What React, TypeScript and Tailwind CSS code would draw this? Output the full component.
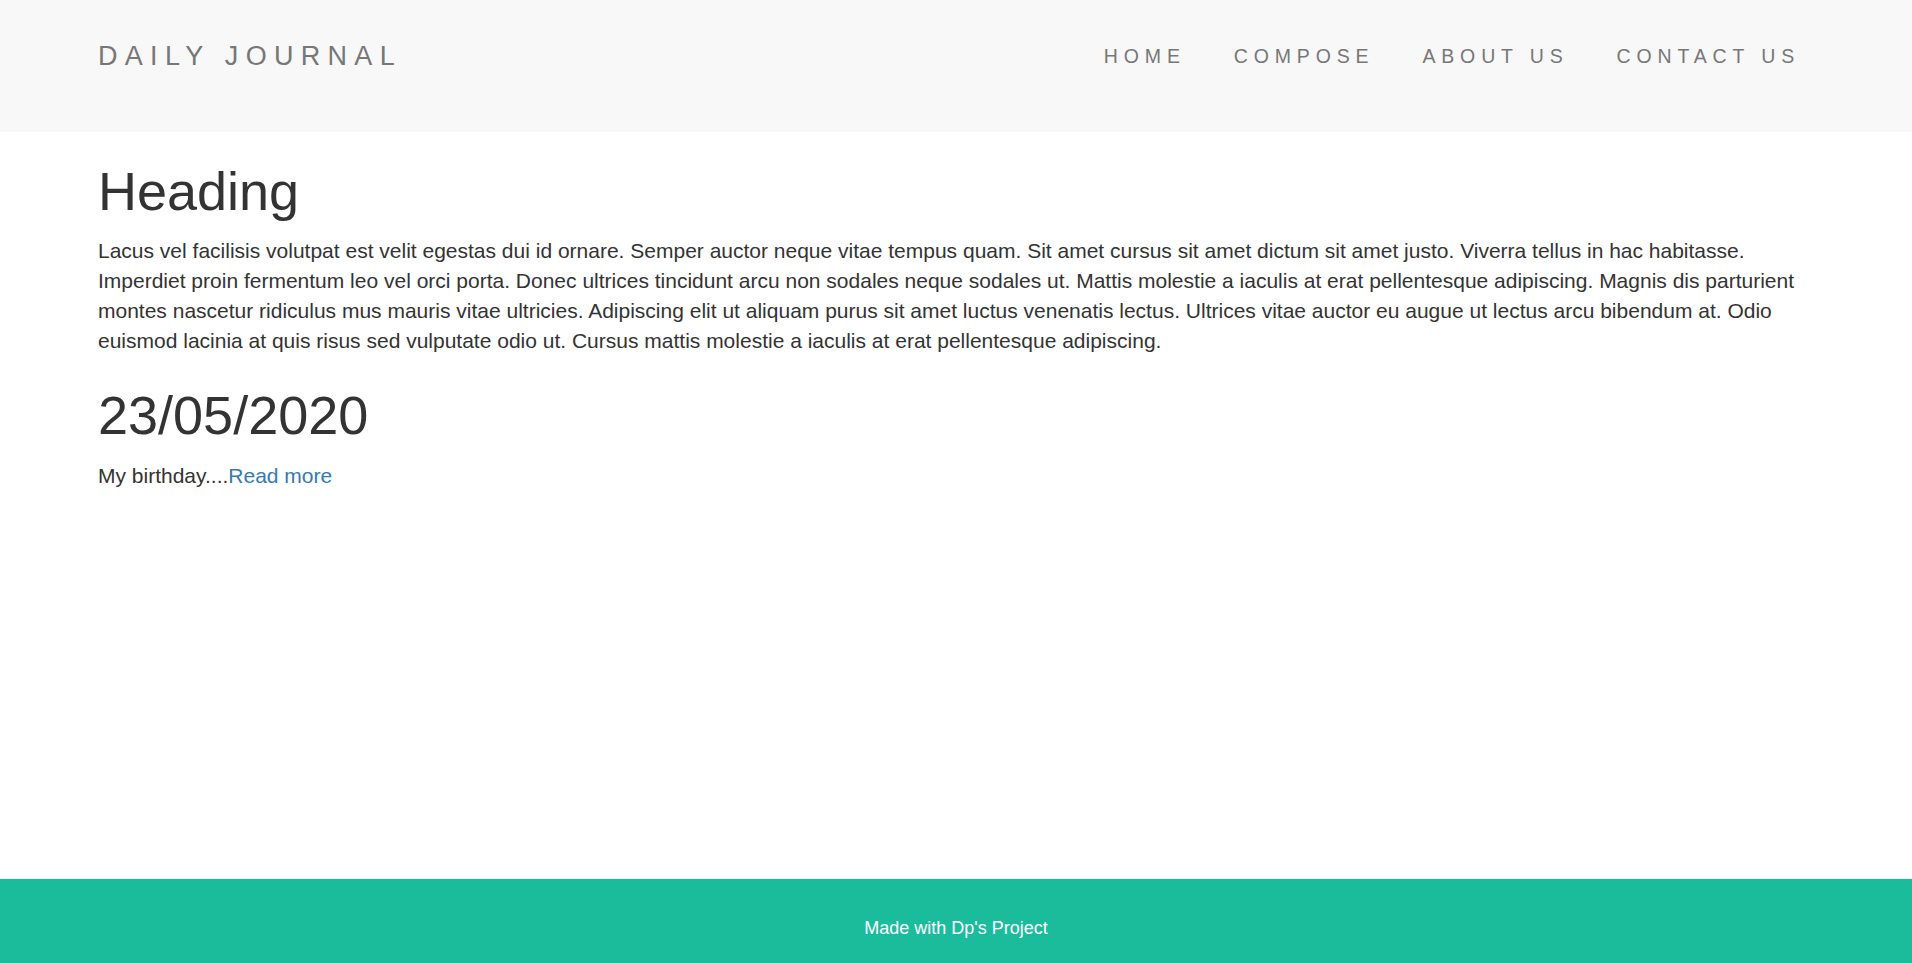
import React from "react";

const navLinks = ["HOME", "COMPOSE", "ABOUT US", "CONTACT US"];

const posts = [
  {
    title: "Heading",
    body:
      "Lacus vel facilisis volutpat est velit egestas dui id ornare. Semper auctor neque vitae tempus quam. Sit amet cursus sit amet dictum sit amet justo. Viverra tellus in hac habitasse. Imperdiet proin fermentum leo vel orci porta. Donec ultrices tincidunt arcu non sodales neque sodales ut. Mattis molestie a iaculis at erat pellentesque adipiscing. Magnis dis parturient montes nascetur ridiculus mus mauris vitae ultricies. Adipiscing elit ut aliquam purus sit amet luctus venenatis lectus. Ultrices vitae auctor eu augue ut lectus arcu bibendum at. Odio euismod lacinia at quis risus sed vulputate odio ut. Cursus mattis molestie a iaculis at erat pellentesque adipiscing.",
  },
];

const App = () => {
  return (
    <div className="min-h-screen flex flex-col bg-white text-[#333] font-['Liberation_Sans',Arial,sans-serif]">
      {/* Navbar */}
      <header className="h-[132px] bg-[#f8f8f8] shrink-0">
        <div className="flex items-start justify-between px-[98px] pt-[41px]">
          <a className="text-[27px] leading-[30px] tracking-[7.3px] text-[#777]">
            DAILY JOURNAL
          </a>
          <ul className="flex items-start gap-[48px] mr-[14px]">
            {navLinks.map((link) => (
              <li
                key={link}
                className="text-[19.5px] leading-[30px] tracking-[5.85px] text-[#777]"
              >
                {link}
              </li>
            ))}
          </ul>
        </div>
      </header>

      {/* Content */}
      <main className="flex-1 px-[98px] pt-[30px]">
        {posts.map((p) => (
          <div key={p.title}>
            <h1 className="text-[54px] leading-[1.1] mb-[15px]">{p.title}</h1>
            <p className="text-[21px] leading-[30px] mb-[15px]">{p.body}</p>
          </div>
        ))}

        <h1 className="text-[54px] leading-[1.1] mt-[30px] mb-[15px]">
          23/05/2020
        </h1>
        <p className="text-[21px] leading-[30px]">
          My birthday....
          <a className="text-[#337ab7]">Read more</a>
        </p>
      </main>

      {/* Footer */}
      <footer className="h-[84px] bg-[#1abc9c] flex items-center justify-center pt-[15px] shrink-0">
        <p className="text-[18px] text-white">Made with Dp's Project</p>
      </footer>
    </div>
  );
};

export default App;
